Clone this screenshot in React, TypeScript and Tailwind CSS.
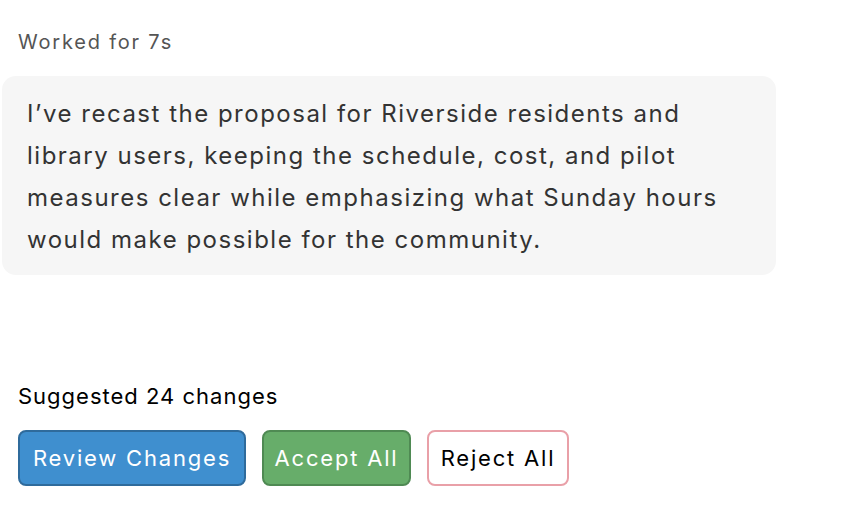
export default function App() {
  return (
    <div className="h-[514px] w-[864px] bg-white font-['Inter',sans-serif] overflow-hidden">
      <div className="pt-[28px] pl-[18px] text-[20px] leading-[28px] tracking-[1.8px] text-[#555]">Worked for 7s</div>

      {/* Response bubble */}
      <div className="mt-[20px] ml-[2px] w-[774px] h-[199px] rounded-[14px] bg-[#f6f6f6] pl-[25px] pr-[40px] pt-[17px] text-[24px] leading-[42px] tracking-[1.5px] text-[#333]">
        I’ve recast the proposal for Riverside residents and library users, keeping the schedule, cost, and pilot
        measures clear while emphasizing what Sunday hours would make possible for the community.
      </div>

      <div className="mt-[107px] pl-[18px] text-[22px] leading-[28px] tracking-[1px] text-black">Suggested 24 changes</div>

      <div className="mt-[20px] flex gap-[16px] pl-[18px]">
        <button className="h-[56px] w-[228px] rounded-[8px] border-2 border-[#2f6b9c] bg-[#3f8fcf] text-[22px] tracking-[1.8px] text-white">
          Review Changes
        </button>
        <button className="h-[56px] w-[149px] rounded-[8px] border-2 border-[#4f8a53] bg-[#67ad6a] text-[22px] tracking-[1.8px] text-white">
          Accept All
        </button>
        <button className="h-[56px] w-[142px] rounded-[8px] border-2 border-[#e9a0a8] bg-white text-[22px] tracking-[1.8px] text-black">
          Reject All
        </button>
      </div>
    </div>
  );
}
